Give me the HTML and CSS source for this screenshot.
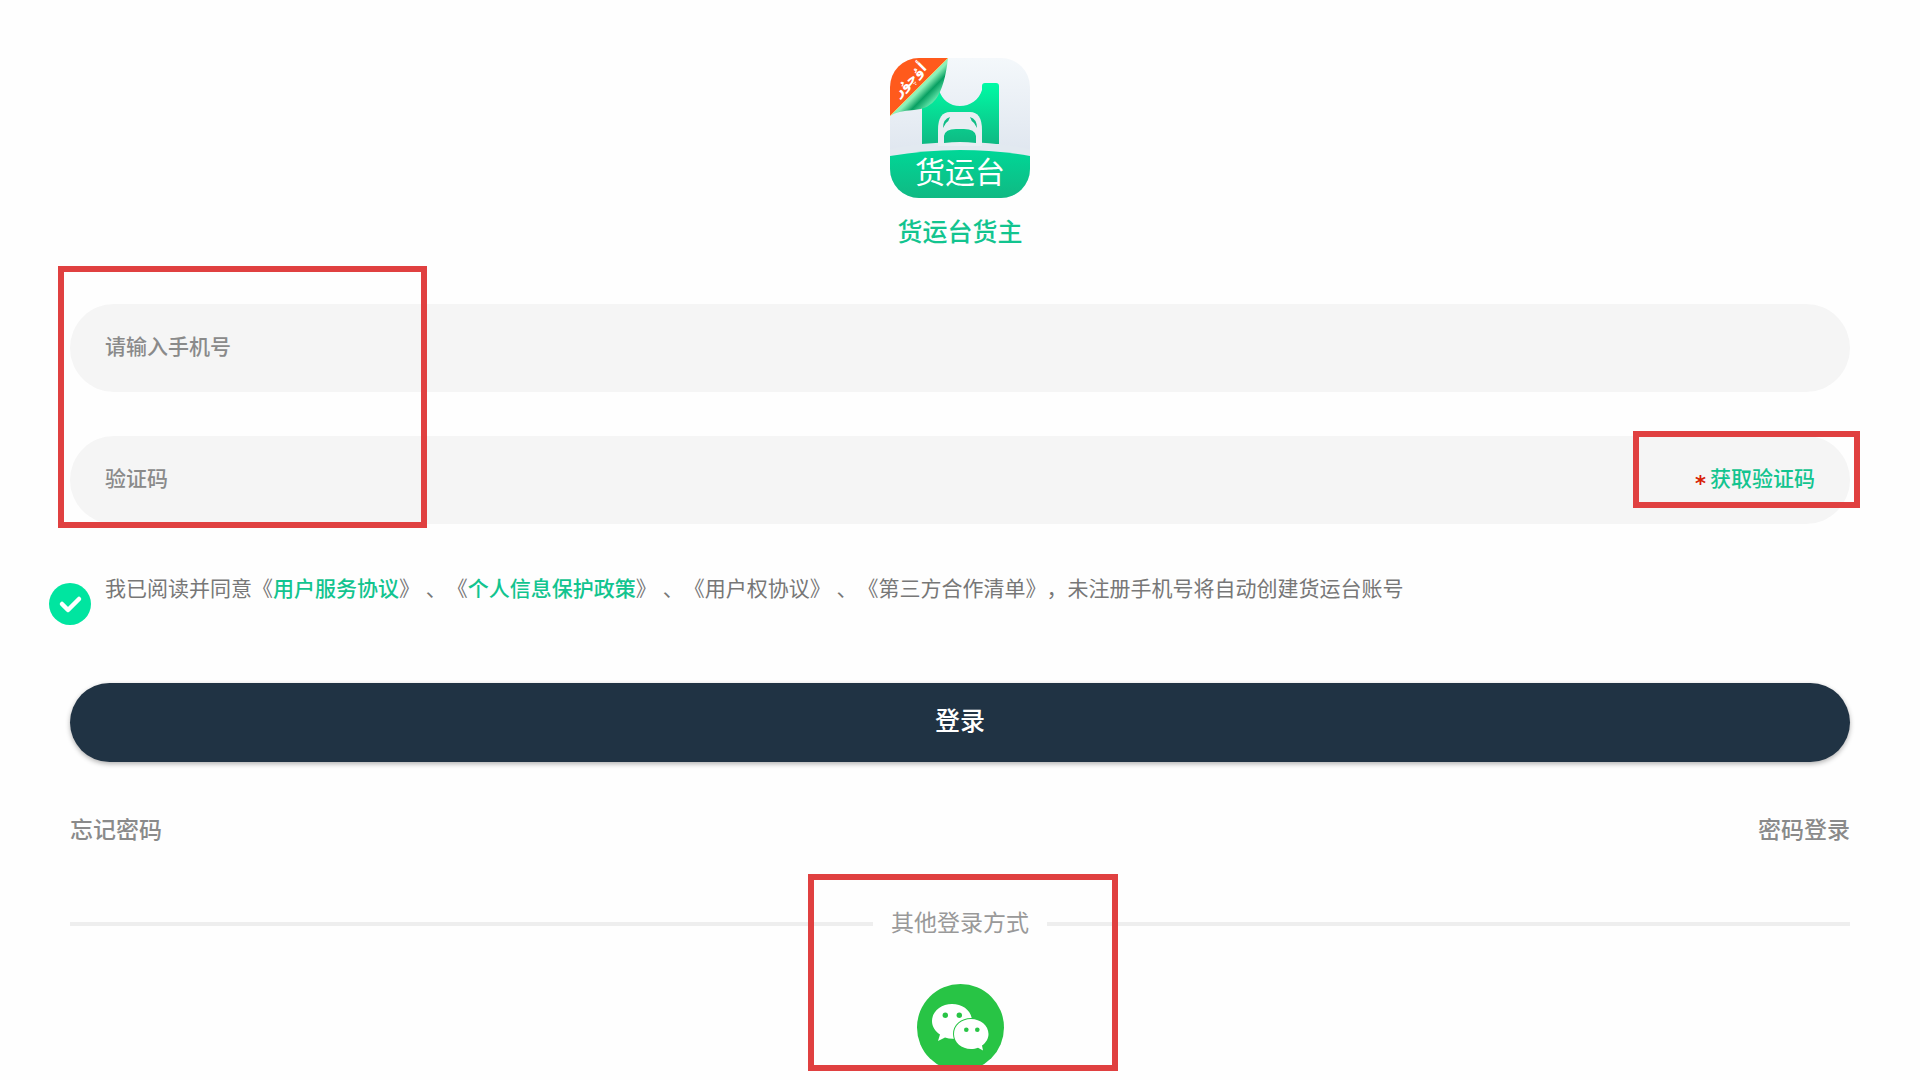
FILE: index.html
```
<!DOCTYPE html>
<html lang="zh-CN">
<head>
<meta charset="utf-8">
<meta name="viewport" content="width=device-width, initial-scale=1">
<title>货运台货主 - 登录</title>
<link rel="stylesheet" href="styles.css">
</head>
<body>
<main class="page">
  <header class="brand">
    <svg class="brand-logo" viewBox="0 0 140 140" aria-hidden="true">
      <defs>
        <clipPath id="tile"><rect width="140" height="140" rx="29"/></clipPath>
        <linearGradient id="sky" x1="0" y1="0" x2="0" y2="1">
          <stop offset="0" stop-color="#f4f8fb"/><stop offset=".7" stop-color="#dfe6ef"/>
        </linearGradient>
        <linearGradient id="tower" gradientUnits="userSpaceOnUse" x1="0" y1="25" x2="0" y2="86">
          <stop offset="0" stop-color="#00fba5"/><stop offset="1" stop-color="#0fb983"/>
        </linearGradient>
        <linearGradient id="hill" x1="0" y1="0" x2="0" y2="1">
          <stop offset="0" stop-color="#00d797"/><stop offset="1" stop-color="#10b983"/>
        </linearGradient>
        <linearGradient id="curl" gradientUnits="userSpaceOnUse" x1="28" y1="28" x2="47" y2="47">
          <stop offset="0" stop-color="#8df0b8"/><stop offset=".15" stop-color="#8df0b8"/><stop offset=".45" stop-color="#08a062"/><stop offset=".8" stop-color="#5fe3a8"/><stop offset="1" stop-color="#2fcf90"/>
        </linearGradient>
      </defs>
      <g clip-path="url(#tile)">
        <rect width="140" height="140" fill="url(#sky)"/>
        <path d="M32 86V30q0-5 5-5h12v7c3 10 11 16 21 16s19-6 22-16v-4q0-3 3-3h11q3 0 3 3v58z" fill="url(#tower)"/>
        <path d="M0 91Q70 77 140 91V110H0z" fill="#e2e9f0"/>
        <path d="M48 88V72q0-18 12-18h20q12 0 12 18v16z" fill="#e8eef3"/>
        <path d="M54 85v-7q1-7 12-7h8q11 0 12 7v7q-16-2-32 0z" fill="url(#tower)"/>
        <path d="M53 70q0-9 7-11q-1 4-4 6zM87 70q0-9-7-11q1 4 4 6z" fill="#10bd86"/>
        <path d="M0 98Q70 86 140 98V140H0z" fill="url(#hill)"/>
        <path d="M58 0Q55 28 46 41Q39 51 24 52Q7 53 0 58z" fill="url(#curl)"/>
        <path d="M0 0H58L0 58z" fill="#ff5a1c"/>
        <path d="M58 0L0 58" stroke="#e8cf75" stroke-width="1"/>
      </g>
      <text class="logo-name" x="70" y="125" text-anchor="middle">货运台</text>
      <text class="logo-ribbon" x="23" y="25" text-anchor="middle" transform="rotate(-45 23 25)">أۇچۇر</text>
    </svg>
    <h1 class="brand-title">货运台货主</h1>
  </header>

  <form class="login">
    <div class="fields">
      <div class="field">
        <input class="field-input" type="tel" placeholder="请输入手机号" aria-label="请输入手机号">
      </div>
      <div class="field">
        <input class="field-input" type="text" placeholder="验证码" aria-label="验证码">
        <span class="required">*</span>
        <button class="get-code" type="button">获取验证码</button>
        <span class="mark mark-code"></span>
      </div>
      <span class="mark mark-fields"></span>
    </div>

    <div class="agreement">
      <span class="check">
        <input class="check-input" type="checkbox" id="agree" checked>
        <svg class="check-tick" viewBox="0 0 42 42" aria-hidden="true"><path d="M13 21l6 6L30 16" fill="none" stroke="#fff" stroke-width="4.5" stroke-linecap="round" stroke-linejoin="round"/></svg>
      </span>
      <label class="agreement-text" for="agree">我已阅读并同意《<a href="#service">用户服务协议</a>》 、《<a href="#privacy">个人信息保护政策</a>》 、《用户权协议》 、《第三方合作清单》，未注册手机号将自动创建货运台账号</label>
    </div>

    <button class="submit" type="submit">登录</button>
  </form>

  <nav class="links">
    <a href="#forgot">忘记密码</a>
    <a href="#password">密码登录</a>
  </nav>

  <section class="other">
    <h2 class="other-title">其他登录方式</h2>
    <button class="wechat" type="button" aria-label="微信登录">
      <svg viewBox="0 0 87 87" aria-hidden="true">
        <circle cx="43.5" cy="43.5" r="43.5" fill="#28c445"/>
        <path d="M35 20C24 20 15 27.500 15 37c0 5.500 3 10 8 13.500L21 57l7-3.500c3 1 6 1.500 9 1.300C47 54 55 47 55 37S46 20 35 20z" fill="#fff"/>
        <path d="M54 35c-9.500 0-17 6.500-17 15s7.500 15 17 15c2.500 0 5-.500 7-1.300L66 66.500 65 61.500c4-2.700 6.500-7 6.500-11.500C71.500 41.500 63.500 35 54 35z" fill="#fff" stroke="#28c445" stroke-width="2" paint-order="stroke"/>
        <g fill="#28c445"><circle cx="28.300" cy="31.300" r="2.700"/><circle cx="42.300" cy="31.300" r="2.700"/><circle cx="49.300" cy="45.700" r="2.300"/><circle cx="60.300" cy="45.700" r="2.300"/></g>
      </svg>
    </button>
    <span class="mark mark-other"></span>
  </section>
</main>
</body>
</html>
```
FILE: styles.css
```
* { box-sizing: border-box; }

body {
  margin: 0;
  background: #fefefe;
  color: #777;
  font-family: "Noto Sans CJK SC", sans-serif;
  font-weight: 500;
  text-spacing-trim: space-all;
}

a { color: inherit; text-decoration: none; }

button, input { font: inherit; }

button {
  padding: 0;
  border: 0;
  background: none;
  cursor: pointer;
}

.page { padding: 58px 70px 8px; }

.brand {
  display: flex;
  flex-direction: column;
  align-items: center;
  gap: 14px;
}

.brand-logo { width: 140px; height: 140px; }

.logo-name { font-size: 30px; font-weight: 400; fill: #fff; }

.logo-ribbon {
  font-family: "DejaVu Sans", sans-serif;
  font-size: 14px;
  font-weight: 700;
  fill: #fff;
}

.brand-title {
  margin: 0;
  color: #12c48f;
  font-size: 25px;
  font-weight: 500;
  line-height: 36px;
}

.fields {
  position: relative;
  display: flex;
  flex-direction: column;
  gap: 44px;
  margin-top: 56px;
}

.field {
  position: relative;
  display: flex;
  align-items: center;
  height: 88px;
  padding: 0 35px;
  border-radius: 44px;
  background: #f5f5f5;
  font-size: 21px;
}

.field-input {
  flex: 1;
  min-width: 0;
  height: 100%;
  padding: 0 0 6px;
  border: 0;
  outline: 0;
  background: none;
  color: #333;
}

.field-input::placeholder { color: #8a8a8a; opacity: 1; }

.required {
  padding-top: 8px;
  margin-right: 4px;
  color: #d81e06;
  font-family: "DejaVu Sans", sans-serif;
  font-weight: 700;
}

.get-code { padding-bottom: 6px; color: #12c48f; }

.mark {
  position: absolute;
  border: 6px solid #e04040;
  pointer-events: none;
}

.mark-fields { top: -38px; left: -12px; width: 369px; height: 262px; }

.mark-code { top: -5px; right: -10px; width: 227px; height: 77px; }

.mark-other { top: -30px; left: 50%; width: 310px; height: 197px; margin-left: -152px; }

.agreement {
  display: flex;
  gap: 14px;
  margin: 51px 0 0 -21px;
}

.check {
  position: relative;
  flex: none;
  width: 42px;
  height: 42px;
  margin-top: 8px;
}

.check-input {
  width: 100%;
  height: 100%;
  margin: 0;
  appearance: none;
  border-radius: 50%;
  background: #00e5a0;
}

.check-tick { position: absolute; inset: 0; pointer-events: none; }

.agreement-text {
  font-family: "Liberation Sans", "Noto Sans CJK SC", sans-serif;
  font-size: 21px;
  font-weight: 400;
  line-height: 28px;
}

.agreement-text a { color: #12c48f; font-weight: 500; }

.submit {
  width: 100%;
  height: 79px;
  margin-top: 58px;
  padding-bottom: 8px;
  border-radius: 40px;
  background: #203344;
  box-shadow: 0 2px 5px rgba(0, 0, 0, .3);
  color: #fff;
  font-size: 25px;
}

.links {
  display: flex;
  justify-content: space-between;
  margin-top: 49px;
  color: #8a8a8a;
  font-size: 23px;
  line-height: 34px;
}

.other {
  position: relative;
  display: flex;
  flex-direction: column;
  align-items: center;
  gap: 46px;
  margin-top: 59px;
}

.other-title {
  display: flex;
  align-items: center;
  gap: 18px;
  width: 100%;
  margin: 0;
  color: #999;
  font-size: 23px;
  font-weight: 400;
  line-height: 34px;
}

.other-title::before,
.other-title::after {
  flex: 1;
  height: 4px;
  margin-top: 6px;
  background: #eee;
  content: "";
}

.wechat { width: 87px; height: 87px; }

.wechat svg { display: block; }
```
